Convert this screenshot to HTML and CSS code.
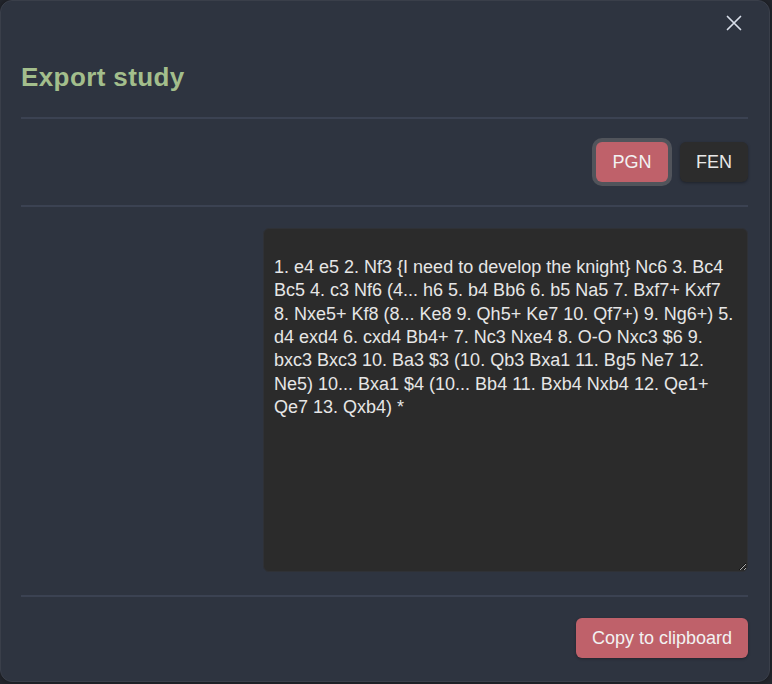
FILE: index.html
```html
<!DOCTYPE html>
<html lang="en">
<head>
    <meta charset="UTF-8">
    <meta name="viewport" content="width=device-width, initial-scale=1.0">
    <title>Export study</title>
    <link rel="stylesheet" href="styles.css">
</head>
<body>
    <div class="modal">
        <div class="modal-top">
            <button class="close-btn" aria-label="Close">
                <svg width="16" height="16" viewBox="0 0 16 16">
                    <path d="M1.5 1.5 L14.5 14.5 M14.5 1.5 L1.5 14.5" stroke="#d8dee9" stroke-width="1.7" stroke-linecap="round" fill="none"/>
                </svg>
            </button>
        </div>

        <h2 class="modal-title">Export study</h2>
        <hr class="divider">

        <div class="format-row">
            <button class="btn btn-red active">PGN</button>
            <button class="btn btn-dark">FEN</button>
        </div>
        <hr class="divider">

        <div class="body-row">
            <div class="body-spacer"></div>
            <textarea class="export-text" spellcheck="false">1. e4 e5 2. Nf3 {I need to develop the knight} Nc6 3. Bc4 Bc5 4. c3 Nf6 (4... h6 5. b4 Bb6 6. b5 Na5 7. Bxf7+ Kxf7 8. Nxe5+ Kf8 (8... Ke8 9. Qh5+ Ke7 10. Qf7+) 9. Ng6+) 5. d4 exd4 6. cxd4 Bb4+ 7. Nc3 Nxe4 8. O-O Nxc3 $6 9. bxc3 Bxc3 10. Ba3 $3 (10. Qb3 Bxa1 11. Bg5 Ne7 12. Ne5) 10... Bxa1 $4 (10... Bb4 11. Bxb4 Nxb4 12. Qe1+ Qe7 13. Qxb4) *</textarea>
        </div>
        <hr class="divider divider-tight">

        <div class="footer-row">
            <button class="btn btn-red copy-btn">Copy to clipboard</button>
        </div>
    </div>
</body>
</html>
```

FILE: styles.css
```css
* {
    margin: 0;
    padding: 0;
    box-sizing: border-box;
}

body {
    font-family: 'Liberation Sans', Arial, sans-serif;
    background: #23262d;
    width: 772px;
    height: 684px;
    overflow: hidden;
}

.modal {
    width: 770px;
    height: 682px;
    background: #2e3440;
    border: 1px solid #3a3f4a;
    border-radius: 12px;
    padding: 0 21px 0 20px;
    display: flex;
    flex-direction: column;
    box-shadow: 0 0 6px rgba(0, 0, 0, 0.4);
}

.modal-top {
    height: 44px;
    display: flex;
    justify-content: flex-end;
    align-items: center;
}

.close-btn {
    background: none;
    border: none;
    width: 20px;
    height: 20px;
    display: flex;
    align-items: center;
    justify-content: center;
    margin-right: 4px;
    cursor: pointer;
}

.modal-title {
    margin-top: 17px;
    font-size: 26px;
    line-height: 30px;
    font-weight: bold;
    color: #a3be8c;
    letter-spacing: 0.4px;
}

.divider {
    border: none;
    height: 2px;
    background: #3b4252;
    margin-top: 25px;
}

.divider-tight {
    margin-top: 23px;
}

.format-row {
    display: flex;
    justify-content: flex-end;
    gap: 12px;
    margin-top: 23px;
    margin-bottom: -2px;
}

.btn {
    height: 40px;
    border: none;
    border-radius: 6px;
    font-family: 'Liberation Sans', Arial, sans-serif;
    font-size: 18px;
    padding: 0 16px;
    white-space: nowrap;
    cursor: pointer;
}

.btn-red {
    background: #bf616a;
    color: #f2f2f2;
}

.btn-red.active {
    width: 72px;
    box-shadow: 0 0 0 4px #51545b;
}

.btn-dark {
    width: 68px;
    background: #2c2c2c;
    color: #e8e8e8;
    box-shadow: 0 1px 3px rgba(0, 0, 0, 0.35);
}

.body-row {
    display: flex;
    margin-top: 21px;
}

.body-spacer {
    flex: 0 0 242px;
}

.export-text {
    flex: 1;
    height: 344px;
    background: #2b2b2b;
    border: 1px solid #2f3136;
    border-radius: 6px;
    color: #e6e6e6;
    font-family: 'Liberation Sans', Arial, sans-serif;
    font-size: 18px;
    line-height: 23.33px;
    padding: 27px 10px 10px 10px;
    resize: vertical;
    outline: none;
}

.footer-row {
    display: flex;
    justify-content: flex-end;
    margin-top: 21px;
}

.copy-btn {
    box-shadow: 0 1px 3px rgba(0, 0, 0, 0.3);
}
```
